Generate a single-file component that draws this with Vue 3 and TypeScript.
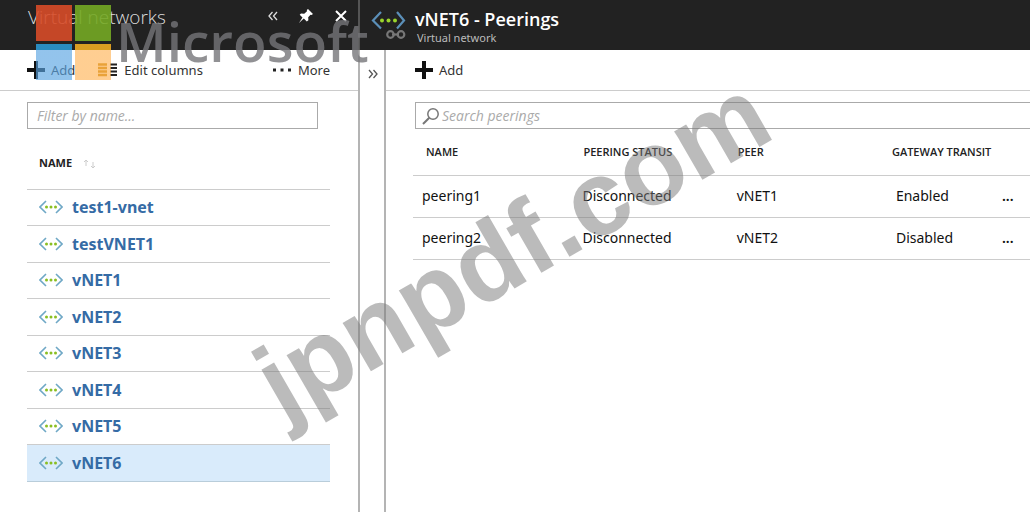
<script setup lang="ts">
interface Peering {
  name: string
  status: string
  peer: string
  transit: string
}

const networks: string[] = ['test1-vnet', 'testVNET1', 'vNET1', 'vNET2', 'vNET3', 'vNET4', 'vNET5', 'vNET6']
const selected = 'vNET6'
const peerings: Peering[] = [
  { name: 'peering1', status: 'Disconnected', peer: 'vNET1', transit: 'Enabled' },
  { name: 'peering2', status: 'Disconnected', peer: 'vNET2', transit: 'Disabled' },
]
</script>

<template>
  <div class="portal">
    <section class="blade networks">
      <header class="head">
        <h1 class="light-title">Virtual networks</h1>
        <div class="window-tools">
          <button type="button" aria-label="Collapse">
            <svg width="10" height="10" viewBox="0 0 10 10"><path d="M4.5 1 1 5l3.500 4M9 1 5.500 5 9 9" fill="none" stroke="#ddd" stroke-width="1.300" /></svg>
          </button>
          <button type="button" aria-label="Pin">
            <svg width="16" height="16" viewBox="0 0 16 16"><path d="M10 1l5 5-1.500 1-1-.3-2.300 2.600.2 3-1.600 1.200-3-3L1 15l3.500-5.500-2.800-2.700L3 5.500l3.200.2L9 3.300 8.800 2z" fill="#fff" /></svg>
          </button>
          <button type="button" aria-label="Close">
            <svg width="14" height="14" viewBox="0 0 14 14"><path d="M2 2l10 10M12 2 2 12" stroke="#fff" stroke-width="2" /></svg>
          </button>
        </div>
      </header>
      <div class="toolbar">
        <button type="button">
          <svg width="18" height="18" viewBox="0 0 18 18"><path d="M9 0v18M0 9h18" stroke="#111" stroke-width="4" /></svg>
          <span>Add</span>
        </button>
        <button type="button" class="columns">
          <svg width="20" height="14" viewBox="0 0 20 14"><path d="M0 1.500h9M0 5h9M0 8.500h9M0 12h9" stroke="#c08000" stroke-width="2.400" /><path d="M12 1.500h7M12 5h7M12 8.500h7M12 12h7" stroke="#222" stroke-width="2" /></svg>
          <span>Edit columns</span>
        </button>
        <button type="button" class="more">
          <svg width="20" height="4" viewBox="0 0 20 4"><path d="M1 2h3M8.500 2h3M16 2h3" stroke="#222" stroke-width="3" /></svg>
          <span>More</span>
        </button>
      </div>
      <div class="list-area">
        <input class="filter" type="text" aria-label="Filter by name" placeholder="Filter by name..." />
        <table class="network-table">
          <thead>
            <tr>
              <th scope="col">
                NAME
                <svg class="sort" width="13" height="12" viewBox="0 0 13 12"><path d="M3 8V2M1 4l2-2 2 2M10 4v6M8 8l2 2 2-2" fill="none" stroke="#ccc" /></svg>
              </th>
            </tr>
          </thead>
          <tbody>
            <tr v-for="network in networks" :key="network" :class="{ selected: network === selected }">
              <td>
                <a href="#">
                  <svg width="24" height="14" viewBox="0 0 24 14"><path d="M7 1 1 7l6 6M17 1l6 6-6 6" fill="none" stroke="#6fa8c6" stroke-width="1.600" /><g fill="#8abf22"><circle cx="7.500" cy="7" r="1.500" /><circle cx="12" cy="7" r="1.500" /><circle cx="16.500" cy="7" r="1.500" /></g></svg>
                  <span>{{ network }}</span>
                </a>
              </td>
            </tr>
          </tbody>
        </table>
      </div>
    </section>

    <div class="rail">
      <button type="button" aria-label="Expand">
        <svg width="10" height="10" viewBox="0 0 10 10"><path d="M1 1l3.500 4L1 9M5.500 1 9 5 5.500 9" fill="none" stroke="#555" stroke-width="1.300" /></svg>
      </button>
    </div>

    <section class="blade peerings">
      <header class="head">
        <svg class="resource-icon" width="36" height="30" viewBox="0 0 36 30"><path d="M11 3 3 11.500l8 8M27 3l7 8.500-7 8" fill="none" stroke="#5b8fb8" stroke-width="2.200" /><g fill="#9bd62c"><circle cx="12" cy="11.500" r="2" /><circle cx="18.500" cy="11.500" r="2" /><circle cx="25" cy="11.500" r="2" /></g><g fill="none" stroke="#777" stroke-width="2.200"><circle cx="20.500" cy="25.500" r="3.300" /><circle cx="31" cy="25.500" r="3.300" /><path d="M22 25.500h7" /></g></svg>
        <div>
          <h2 class="title">vNET6 - Peerings</h2>
          <p class="subtitle">Virtual network</p>
        </div>
      </header>
      <div class="toolbar">
        <button type="button">
          <svg width="18" height="18" viewBox="0 0 18 18"><path d="M9 0v18M0 9h18" stroke="#111" stroke-width="4" /></svg>
          <span>Add</span>
        </button>
      </div>
      <div class="search">
        <svg width="18" height="18" viewBox="0 0 18 18"><circle cx="11" cy="7" r="5.200" fill="none" stroke="#777" stroke-width="1.500" /><path d="M7.300 10.700 1 17" stroke="#777" stroke-width="2" /></svg>
        <input type="text" aria-label="Search peerings" placeholder="Search peerings" />
      </div>
      <table class="peering-table">
        <thead>
          <tr>
            <th scope="col" class="c-name">NAME</th>
            <th scope="col" class="c-status">PEERING STATUS</th>
            <th scope="col" class="c-peer">PEER</th>
            <th scope="col" class="c-transit">GATEWAY TRANSIT</th>
            <td class="c-menu"></td>
          </tr>
        </thead>
        <tbody>
          <tr v-for="row in peerings" :key="row.name">
            <td>{{ row.name }}</td>
            <td>{{ row.status }}</td>
            <td>{{ row.peer }}</td>
            <td class="transit">{{ row.transit }}</td>
            <td class="menu"><button type="button" :aria-label="'Options for ' + row.name">...</button></td>
          </tr>
        </tbody>
      </table>
    </section>

    <div class="brand">
      <div class="tiles"><i class="red"></i><i class="green"></i><i class="blue"></i><i class="yellow"></i></div>
      <span class="brand-name">Microsoft</span>
    </div>
    <div class="watermark">jpnpdf.com</div>
  </div>
</template>

<style>
body {
  margin: 0;
  background: #fff;
}
</style>

<style scoped>
* {
  box-sizing: border-box;
}
.portal {
  position: relative;
  display: flex;
  min-height: 100vh;
  overflow: hidden;
  background: #fff;
  color: #222;
  font-family: "Noto Sans", "Open Sans", sans-serif;
  font-size: 13px;
}
button {
  display: flex;
  align-items: center;
  padding: 0;
  border: 0;
  background: none;
  color: inherit;
  font: inherit;
}
svg {
  flex: none;
}
.networks {
  flex: 0 0 360px;
  border-right: 2px solid #b4b4b4;
}
.head {
  display: flex;
  height: 50px;
  background: #222;
  color: #fff;
}
.networks .head {
  justify-content: space-between;
  margin-right: -2px;
  padding: 5px 10px 0 28px;
  border-right: 2px solid #555;
}
.light-title {
  margin: 0;
  color: #ddd;
  font: 300 19px/24px "Open Sans", sans-serif;
}
.window-tools {
  display: flex;
  align-items: center;
  gap: 20px;
  height: 22px;
}
.toolbar {
  display: flex;
  align-items: center;
  height: 41px;
  border-bottom: 1px solid #ccc;
  color: #333;
}
.toolbar button {
  gap: 6px;
}
.networks .toolbar {
  padding: 0 28px 0 27px;
}
.toolbar .columns {
  margin-left: 23px;
}
.toolbar .more {
  margin-left: auto;
}
.list-area {
  padding: 11px 28px 0 27px;
}
.filter {
  display: block;
  width: calc(100% - 12px);
  height: 27px;
  padding: 0 9px;
  border: 1px solid #aaa;
  font: italic 14px/20px "Open Sans", sans-serif;
}
input::placeholder {
  color: #aaa;
  opacity: 1;
}
table {
  width: 100%;
  border-collapse: collapse;
}
th {
  padding: 0 10px;
  text-align: left;
  white-space: nowrap;
  font: 600 11px/16px "Open Sans", sans-serif;
}
.network-table th {
  height: 60px;
  padding: 8px 12px 0;
  font-weight: 700;
}
.sort {
  margin-left: 8px;
  vertical-align: middle;
}
.network-table tbody tr {
  height: 37px;
  border-top: 1px solid #ccc;
}
.network-table tbody tr:nth-child(odd) {
  height: 36px;
}
.network-table td {
  padding: 0 12px;
}
.network-table a {
  display: flex;
  align-items: center;
  gap: 9px;
  color: #356ba5;
  font: bold 16px/20px "Noto Sans", sans-serif;
  text-decoration: none;
}
.network-table .selected {
  border-bottom: 1px solid #b9cdda;
  background: #d9ebfb;
}
.rail {
  flex: 0 0 26px;
  padding-top: 69px;
  border-right: 2px solid #b4b4b4;
  background: linear-gradient(#222 50px, #fff 50px);
}
.rail button {
  margin-left: 8px;
}
.peerings {
  flex: 1;
  min-width: 0;
}
.peerings .head {
  gap: 9px;
  margin-left: -16px;
  padding-top: 9px;
}
.title,
.subtitle {
  margin: 0;
}
.title {
  font: 600 18px/20px "Open Sans", sans-serif;
}
.subtitle {
  padding-left: 2px;
  color: #bbb;
  font-size: 11px;
  line-height: 18px;
}
.peerings .toolbar {
  padding-left: 29px;
}
.search {
  display: flex;
  align-items: center;
  gap: 2px;
  height: 27px;
  margin: 11px 0 0 29px;
  padding-left: 6px;
  border: 1px solid #aaa;
  border-right: 0;
}
.search input {
  flex: 1;
  min-width: 0;
  padding: 0;
  border: 0;
  outline: 0;
  background: none;
  font: italic 14px/20px "Open Sans", sans-serif;
}
.peering-table {
  width: calc(100% - 27px);
  margin-left: 27px;
  table-layout: fixed;
}
.peering-table tr {
  height: 42px;
  border-bottom: 1px solid #ccc;
}
.peering-table thead tr {
  height: 46px;
}
.peering-table td {
  padding: 0 9px;
  color: #111;
  font: 14px/20px "Noto Sans", sans-serif;
}
.c-name {
  width: 26%;
  padding-left: 13px;
}
.c-status {
  width: 25%;
}
.c-peer {
  width: 25%;
}
.c-transit {
  width: 18%;
}
.peering-table .transit {
  padding-left: 14px;
}
.peering-table .menu button {
  font-weight: 600;
}
.brand {
  position: absolute;
  top: 5px;
  left: 36px;
  display: flex;
  gap: 5px;
  pointer-events: none;
}
.tiles {
  display: grid;
  grid-template-columns: 36px 36px;
  grid-auto-rows: 36px;
  gap: 3px;
}
.red {
  background: #d74b28e6;
}
.green {
  background: #74a924e6;
}
.blue {
  background: linear-gradient(#2b97d0e6 6px, #59a4e2a6 6px);
}
.yellow {
  background: linear-gradient(#eeab22e6 6px, #ffb457a6 6px);
}
.brand-name {
  color: #767679cc;
  font: 600 55px/72px "Open Sans", sans-serif;
}
.watermark {
  position: absolute;
  top: 333px;
  left: 283px;
  color: #78787880;
  font: bold 106px/105px "Liberation Sans", Arial, sans-serif;
  transform: rotate(-30deg);
  transform-origin: 0 89px;
  pointer-events: none;
}
</style>
